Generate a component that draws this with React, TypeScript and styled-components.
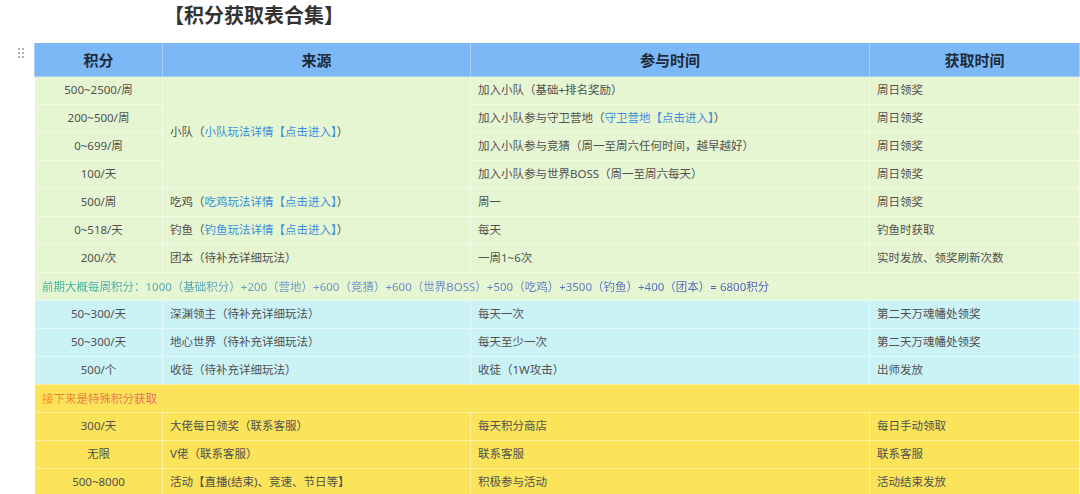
import styled, { createGlobalStyle } from 'styled-components'

const GlobalStyle = createGlobalStyle`
  html, body {
    margin: 0;
    padding: 0;
    background: #ffffff;
  }
  body {
    font-family: "Noto Sans", "Noto Sans CJK SC", sans-serif;
    color: #555;
  }
`

type Tone = 'green' | 'cyan' | 'yellow'

const toneBg: Record<Tone, string> = {
  green: '#e7f6d2',
  cyan: '#cbf3f6',
  yellow: '#fbe45a',
}

interface Row {
  points: string
  source?: React.ReactNode
  sourceSpan?: number
  join: React.ReactNode
  get: string
}

const Link = styled.span`
  color: #3a8fd8;
`

const greenRows: Row[] = [
  {
    points: '500~2500/周',
    source: (
      <>
        小队（<Link>小队玩法详情【点击进入】</Link>）
      </>
    ),
    sourceSpan: 4,
    join: '加入小队（基础+排名奖励）',
    get: '周日领奖',
  },
  {
    points: '200~500/周',
    join: (
      <>
        加入小队参与守卫营地（<Link>守卫营地【点击进入】</Link>）
      </>
    ),
    get: '周日领奖',
  },
  { points: '0~699/周', join: '加入小队参与竞猜（周一至周六任何时间，越早越好）', get: '周日领奖' },
  { points: '100/天', join: '加入小队参与世界BOSS（周一至周六每天）', get: '周日领奖' },
  {
    points: '500/周',
    source: (
      <>
        吃鸡（<Link>吃鸡玩法详情【点击进入】</Link>）
      </>
    ),
    join: '周一',
    get: '周日领奖',
  },
  {
    points: '0~518/天',
    source: (
      <>
        钓鱼（<Link>钓鱼玩法详情【点击进入】</Link>）
      </>
    ),
    join: '每天',
    get: '钓鱼时获取',
  },
  { points: '200/次', source: '团本（待补充详细玩法）', join: '一周1~6次', get: '实时发放、领奖刷新次数' },
]

const cyanRows: Row[] = [
  { points: '50~300/天', source: '深渊领主（待补充详细玩法）', join: '每天一次', get: '第二天万魂幡处领奖' },
  { points: '50~300/天', source: '地心世界（待补充详细玩法）', join: '每天至少一次', get: '第二天万魂幡处领奖' },
  { points: '500/个', source: '收徒（待补充详细玩法）', join: '收徒（1W攻击）', get: '出师发放' },
]

const yellowRows: Row[] = [
  { points: '300/天', source: '大佬每日领奖（联系客服）', join: '每天积分商店', get: '每日手动领取' },
  { points: '无限', source: 'V佬（联系客服）', join: '联系客服', get: '联系客服' },
  { points: '500~8000', source: '活动【直播(结束)、竞速、节日等】', join: '积极参与活动', get: '活动结束发放' },
]

const renderRows = (rows: Row[], tone: Tone, key: string) =>
  rows.map((r, i) => (
    <BodyRow key={`${key}-${i}`} $tone={tone}>
      <Cell $center>{r.points}</Cell>
      {r.source !== undefined && <Cell rowSpan={r.sourceSpan ?? 1}>{r.source}</Cell>}
      <Cell>{r.join}</Cell>
      <Cell>{r.get}</Cell>
    </BodyRow>
  ))

const App = () => {
  return (
    <Page>
      <GlobalStyle />
      <Title>【积分获取表合集】</Title>
      <TableArea>
        <Handle>
          {Array.from({ length: 6 }).map((_, i) => (
            <Dot key={i} />
          ))}
        </Handle>
        <Table>
          <colgroup>
            <col style={{ width: 128 }} />
            <col style={{ width: 308 }} />
            <col style={{ width: 399 }} />
            <col style={{ width: 210 }} />
          </colgroup>
          <thead>
            <HeadRow>
              <HeadCell>积分</HeadCell>
              <HeadCell>来源</HeadCell>
              <HeadCell>参与时间</HeadCell>
              <HeadCell>获取时间</HeadCell>
            </HeadRow>
          </thead>
          <tbody>
            {renderRows(greenRows, 'green', 'g')}
            <BodyRow $tone="green">
              <NoteCell colSpan={4}>
                <SummaryText>
                  前期大概每周积分：1000（基础积分）+200（营地）+600（竞猜）+600（世界BOSS）+500（吃鸡）+3500（钓鱼）+400（团本）= 6800积分
                </SummaryText>
              </NoteCell>
            </BodyRow>
            {renderRows(cyanRows, 'cyan', 'c')}
            <BodyRow $tone="yellow">
              <NoteCell colSpan={4}>
                <SpecialText>接下来是特殊积分获取</SpecialText>
              </NoteCell>
            </BodyRow>
            {renderRows(yellowRows, 'yellow', 'y')}
          </tbody>
        </Table>
      </TableArea>
    </Page>
  )
}

export default App

const Page = styled.div`
  width: 1080px;
  height: 494px;
  overflow: hidden;
`

const Title = styled.h1`
  margin: 0;
  height: 36px;
  padding: 2px 0 0 164px;
  box-sizing: border-box;
  font-family: "Noto Sans CJK SC", sans-serif;
  font-size: 20px;
  font-weight: 700;
  line-height: 26px;
  color: #333;
`

const TableArea = styled.div`
  display: flex;
  align-items: flex-start;
  padding-top: 7px;
`

const Handle = styled.div`
  display: grid;
  grid-template-columns: repeat(2, 2px);
  gap: 2px 2px;
  width: 35px;
  padding: 5px 0 0 18px;
  box-sizing: border-box;
`

const Dot = styled.span`
  width: 2px;
  height: 2px;
  border-radius: 1px;
  background: #9a9a9a;
`

const Table = styled.table`
  width: 1045px;
  flex: none;
  border-collapse: collapse;
  table-layout: fixed;
  font-size: 11.5px;
`

const HeadRow = styled.tr`
  height: 33px;
  background: #7db8f6;
`

const HeadCell = styled.th`
  border: 1px solid #a9d0f8;
  border-top: none;
  font-family: "Noto Sans CJK SC", sans-serif;
  font-size: 15px;
  font-weight: 700;
  color: #1d2a3a;
  text-align: center;
  padding: 0;
`

const BodyRow = styled.tr<{ $tone: Tone }>`
  height: 28px;
  background: ${(p) => toneBg[p.$tone]};
`

const Cell = styled.td<{ $center?: boolean }>`
  border: 1px solid rgba(255, 255, 255, 0.45);
  padding: 0 7px;
  text-align: ${(p) => (p.$center ? 'center' : 'left')};
  vertical-align: middle;
  white-space: nowrap;
  color: #505050;
  line-height: 16px;
`

const NoteCell = styled.td`
  border: 1px solid rgba(255, 255, 255, 0.45);
  padding: 0 7px;
  white-space: nowrap;
`

const SummaryText = styled.span`
  background: linear-gradient(90deg, #35b59a 0%, #6a95c6 35%, #5a78c4 70%, #4a5ab8 100%);
  -webkit-background-clip: text;
  background-clip: text;
  color: transparent;
`

const SpecialText = styled.span`
  background: linear-gradient(90deg, #f08a28 0%, #e9586c 100%);
  -webkit-background-clip: text;
  background-clip: text;
  color: transparent;
`
